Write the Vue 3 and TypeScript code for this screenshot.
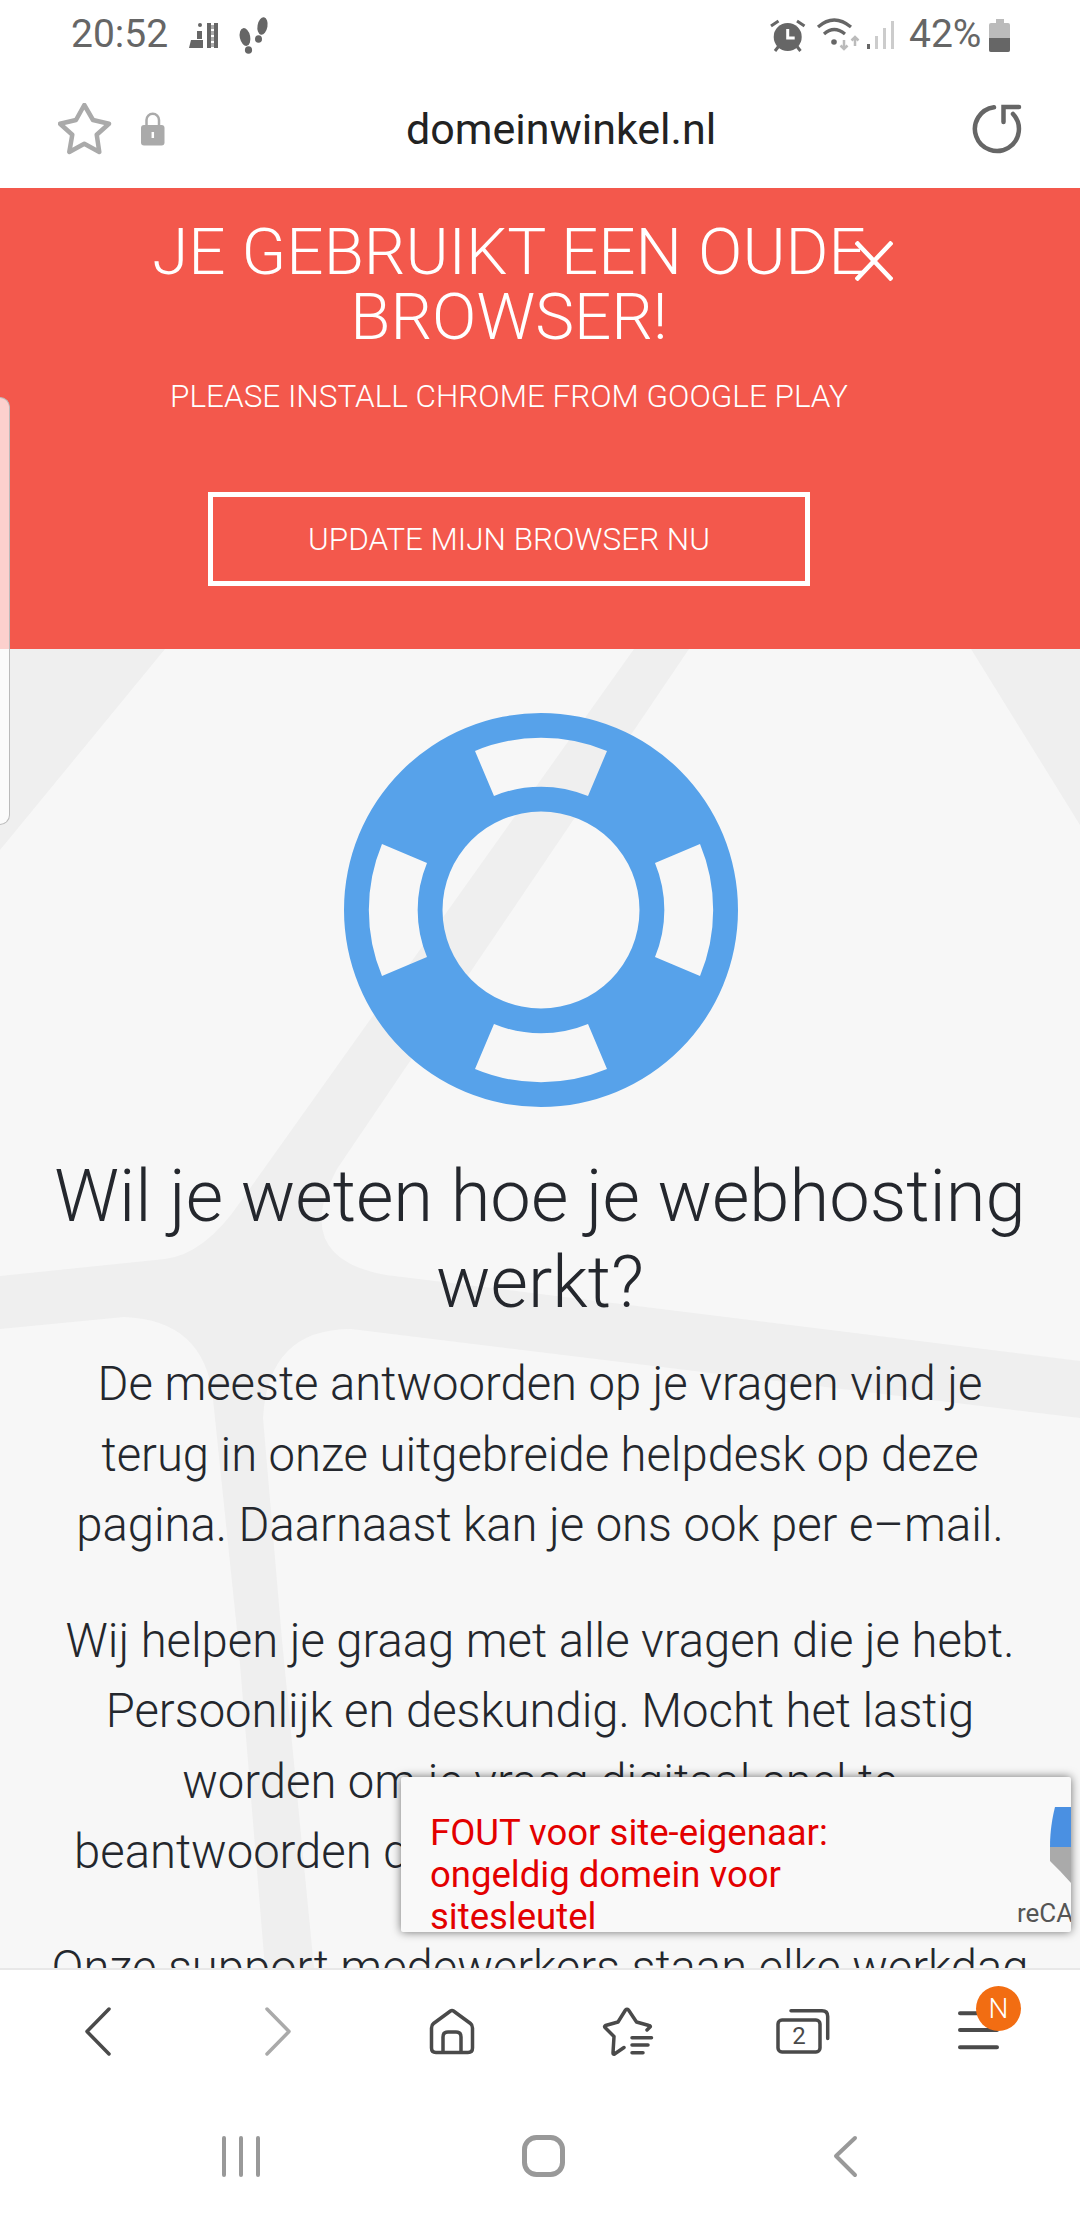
<template>
  <div class="phone">
    <div class="status-bar">
      <span class="time">20:52</span>
      <svg class="notif-icons" viewBox="188 10 84 42" width="84" height="42">
        <g fill="#666">
          <circle cx="200" cy="21" r="2" />
          <path d="M197 27h5v8h-5zM191 36h12v8h-14z" />
          <path d="M207 19h4v25h-4zM214 19h4v25h-4z" />
          <path d="M211 21h3v4h-3zM211 27h3v4h-3zM211 33h3v4h-3zM211 39h3v4h-3z" opacity=".55" />
          <ellipse cx="245" cy="33" rx="5.2" ry="9" transform="rotate(-12 245 33)" />
          <ellipse cx="248.5" cy="46" rx="3.6" ry="3.8" />
          <ellipse cx="262.5" cy="22" rx="5" ry="8.8" transform="rotate(10 262.5 22)" />
          <ellipse cx="258.5" cy="35" rx="3.5" ry="3.8" />
        </g>
      </svg>
      <svg class="sys-icons" viewBox="768 10 128 42" width="128" height="42">
        <circle cx="787.7" cy="33" r="14" fill="#666" />
        <path d="M787.7 25v9h7" fill="none" stroke="#fff" stroke-width="3" />
        <path d="M771 22l7.500-5M797 17l7.500 5M775 47l3.500-4.500M797 42.500l3.500 4.500" fill="none" stroke="#666" stroke-width="3" />
        <path d="M818 23q16-14 33 0M824 30q10-9 21 0" fill="none" stroke="#666" stroke-width="3.2" />
        <circle cx="834" cy="38" r="2.800" fill="#666" />
        <path d="M844 36v9m-3.500-3.500l3.500 3.500 3.500-3.500M855 42v-9m-3.500 3.500l3.500-3.500 3.500 3.500" fill="none" stroke="#bbb" stroke-width="2.500" />
        <path d="M867 40h3v5h-3z" fill="#666" />
        <path d="M875 32h3v13h-3zM883 24h3v21h-3zM891 17h3v28h-3z" fill="#ccc" />
      </svg>
      <span class="battery-text">42%</span>
      <div class="battery">
        <div class="battery-cap"></div>
        <div class="battery-body"><div class="battery-level"></div></div>
      </div>
    </div>

    <div class="url-bar">
      <svg viewBox="58 101 54 52" width="54" height="52">
        <path d="M84.300 103l8.700 15 16 3.700-12.300 11 2.600 17.300-15-8.300-15 8.300 3-17.300-12.300-11 16-3.700z" fill="none" stroke="#aaa" stroke-width="4.500" stroke-linejoin="round" />
      </svg>
      <svg class="lock" viewBox="140 108 26 36" width="26" height="36">
        <path d="M146.500 123v-6a6 6 0 0 1 12.500 0v6" fill="none" stroke="#aaa" stroke-width="2.500" />
        <rect x="141" y="122" width="23.500" height="20.500" rx="3" fill="#aaa" />
        <path d="M152.800 129v6" stroke="#fff" stroke-width="2.500" />
      </svg>
      <span class="url">domeinwinkel.nl</span>
      <svg viewBox="970 102 50 50" width="50" height="50">
        <path d="M992 105.200A22 22 0 1 0 1011 112" fill="none" stroke="#666" stroke-width="4.500" stroke-linecap="round" />
        <path d="M1017 105h-15.500v15" fill="none" stroke="#666" stroke-width="4.500" stroke-linecap="round" />
      </svg>
    </div>

    <section class="banner">
      <h1>JE GEBRUIKT EEN OUDE BROWSER!</h1>
      <p>PLEASE INSTALL CHROME FROM GOOGLE PLAY</p>
      <a class="update-btn">UPDATE MIJN BROWSER NU</a>
      <svg class="close" viewBox="0 0 38 40" width="38" height="40">
        <path d="M1 1l36 38M37 1L1 39" fill="none" stroke="#fff" stroke-width="4.500" />
      </svg>
    </section>

    <main class="content">
      <svg class="roads" viewBox="0 649 1080 1319" width="1080" height="1319">
        <path d="M0 649H165L0 850ZM971 649H1080V825Z" fill="#efefef" />
        <path d="M634 649L241 1201Q205 1254 165 1259L0 1276V1329L124 1317Q205 1320 213 1399L238 1640L265 1968H314L282 1640L263 1418Q268 1329 351 1329L1080 1418V1361L386 1275Q290 1258 337 1169L689 649Z" fill="#efefef" />
      </svg>

      <svg class="buoy" viewBox="-197 -197 394 394" width="394" height="394">
        <path fill-rule="evenodd" fill="#57a2ea" d="M-197 0A197 197 0 1 0 197 0A197 197 0 1 0 -197 0ZM-98.500 0A98.500 98.500 0 1 1 98.500 0A98.500 98.500 0 1 1 -98.500 0ZM-66 -159A172 172 0 0 1 66 -159L47 -114A123 123 0 0 0 -47 -114ZM66 159A172 172 0 0 1 -66 159L-47 114A123 123 0 0 0 47 114ZM159 -66A172 172 0 0 1 159 66L114 47A123 123 0 0 0 114 -47ZM-159 66A172 172 0 0 1 -159 -66L-114 -47A123 123 0 0 0 -114 47Z" />
      </svg>

      <h2>Wil je weten hoe je webhosting werkt?</h2>
      <p class="text">De meeste antwoorden op je vragen vind je terug in onze uitgebreide helpdesk op deze pagina. Daarnaast kan je ons ook per e–mail.</p>
      <p class="text">Wij helpen je graag met alle vragen die je hebt.<br />Persoonlijk en deskundig. Mocht het lastig<br />worden om je vraag digitaal snel te<br />beantwoorden dan helpen we je graag verder.</p>
      <p class="text">Onze support medewerkers staan elke werkdag</p>

      <div class="captcha">
        <div class="captcha-error">FOUT voor site-eigenaar: ongeldig domein voor sitesleutel</div>
        <svg class="captcha-logo" viewBox="0 0 21 76" width="21" height="76">
          <path d="M5 0H21V40H0C0 25 2 12 5 0Z" fill="#4a90e2" />
          <path d="M0 40H21V76L10 64L0 54Z" fill="#aaa" />
        </svg>
        <span class="captcha-label">reCAPTCHA</span>
      </div>
    </main>

    <nav class="bottom">
      <div class="toolbar">
        <svg viewBox="68 2001 60 60" width="60" height="60">
          <path d="M109 2009L87 2031.500L109 2054" class="line dark" />
        </svg>
        <svg viewBox="244 2001 60 60" width="60" height="60">
          <path d="M267 2009L289 2031.500L267 2054" class="line light" />
        </svg>
        <svg viewBox="420 2001 60 60" width="60" height="60">
          <path d="M443 2052v-15q0-5 5-5h8q5 0 5 5v15M436 2052.500h32q4.500 0 4.500-4.500v-20q0-3-2-4.500l-17-12.500q-1.500-1-3 0l-17 12.500q-2 1.500-2 4.500v20q0 4.500 4.500 4.500z" class="line dark" />
        </svg>
        <svg viewBox="596 2001 60 60" width="60" height="60">
          <path d="M647 2030l3-3q1-1-1-1.500l-12.500-3.500-8-12q-1.500-1.500-3 0l-7.500 12-12.500 3.500q-1.500 1-.5 2l9 9-1 16.500q0 1.500 1.500 1l9.500-6.500" class="line dark" />
          <path d="M632 2037.700h19.500M632 2045h16M632 2052.700h11" class="line dark" />
        </svg>
        <svg viewBox="772 2001 60 60" width="60" height="60">
          <rect x="778" y="2020" width="42" height="32" rx="4" class="line dark" />
          <path d="M791 2010.700h31q5.700 0 5.700 5.700v22" class="line dark" />
          <text x="799" y="2044" class="tab-count">2</text>
        </svg>
        <div class="menu">
          <svg viewBox="948 2001 60 60" width="60" height="60">
            <path d="M960 2013.300h37M960 2030h37M960 2047.300h37" class="line dark thick" />
          </svg>
          <span class="badge">N</span>
        </div>
      </div>
      <div class="sys-nav">
        <svg viewBox="211 2126 60 60" width="60" height="60">
          <path d="M224 2138v37M241 2138v37M258 2138v37" class="line sys" />
        </svg>
        <svg viewBox="513 2126 60 60" width="60" height="60">
          <rect x="524.500" y="2137.500" width="38" height="37" rx="12" class="line sys wide" />
        </svg>
        <svg viewBox="815 2126 60 60" width="60" height="60">
          <path d="M855 2138L836 2156L855 2175" class="line sys" />
        </svg>
      </div>
    </nav>

    <div class="edge-tab"></div>
  </div>
</template>

<script setup lang="ts">
</script>

<style>
html,
body {
  margin: 0;
  background: #fff;
}
</style>

<style scoped>
.phone {
  position: relative;
  width: 1080px;
  height: 2220px;
  display: flex;
  flex-direction: column;
  overflow: hidden;
  background: #fff;
  font-family: Roboto, "Liberation Sans", sans-serif;
}

.status-bar {
  height: 70px;
  display: flex;
  align-items: center;
  padding: 0 70px 0 71px;
  box-sizing: border-box;
  color: #666;
  font-size: 39px;
}

.time {
  width: 117px;
  font-weight: 400;
  margin-bottom: 3px;
}

.sys-icons {
  margin-left: auto;
}

.battery-text {
  margin-left: 13px;
  width: 80px;
  margin-bottom: 3px;
}

.battery {
  width: 21px;
  height: 33px;
  display: flex;
  flex-direction: column;
  align-items: center;
}

.battery-cap {
  width: 8px;
  height: 4px;
  background: #bbb;
}

.battery-body {
  width: 21px;
  flex: 1;
  background: #bbb;
  border-radius: 2px;
  display: flex;
  align-items: flex-end;
  overflow: hidden;
}

.battery-level {
  width: 100%;
  height: 46%;
  background: #666;
}

.url-bar {
  height: 118px;
  display: flex;
  align-items: center;
  padding: 0 58px;
  box-sizing: border-box;
}

.lock {
  margin-left: 28px;
}

.url {
  flex: 1;
  margin-right: 16px;
  text-align: center;
  font-size: 43px;
  color: #222;
}

.banner {
  position: relative;
  height: 461px;
  box-sizing: border-box;
  padding: 31px 62px 0 0;
  display: flex;
  flex-direction: column;
  align-items: center;
  background: #f3584c;
  color: #fff;
  font-weight: 300;
}

.banner h1 {
  margin: 0;
  width: 760px;
  text-align: center;
  font-size: 65.500px;
  line-height: 65px;
  font-weight: 300;
}

.banner p {
  margin: 23px 0 0;
  font-size: 31.500px;
  line-height: 50px;
}

.update-btn {
  margin-top: 70px;
  width: 602px;
  height: 94px;
  box-sizing: border-box;
  border: 5px solid #fff;
  display: flex;
  align-items: center;
  justify-content: center;
  font-size: 31.500px;
}

.close {
  position: absolute;
  left: 855px;
  top: 53px;
}

.content {
  position: relative;
  flex: 1;
  min-height: 0;
  overflow: hidden;
  background: #f7f7f7;
  padding-top: 64px;
  display: flex;
  flex-direction: column;
  align-items: center;
  color: #24272d;
  text-align: center;
}

.roads {
  position: absolute;
  left: 0;
  top: 0;
}

.buoy {
  position: relative;
  flex: none;
  margin-left: 2px;
}

.content h2 {
  position: relative;
  margin: 47px 0 0;
  width: 1000px;
  font-size: 72.300px;
  line-height: 86px;
  font-weight: 300;
}

.text {
  position: relative;
  margin: 0 0 45px;
  width: 1060px;
  flex: none;
  font-size: 47.200px;
  line-height: 70.500px;
  font-weight: 300;
  white-space: nowrap;
}

.content h2 + .text {
  margin-top: 23px;
  width: 960px;
  white-space: normal;
}

.captcha {
  position: absolute;
  left: 401px;
  top: 1128px;
  width: 670px;
  height: 155px;
  overflow: hidden;
  background: #f9f9f9;
  box-shadow: 0 0 10px rgba(0, 0, 0, 0.55);
  border-radius: 2px;
  text-align: left;
}

.captcha-error {
  position: absolute;
  left: 29px;
  top: 35px;
  width: 460px;
  font-size: 36.500px;
  line-height: 42px;
  color: #e30000;
}

.captcha-logo {
  position: absolute;
  right: 0;
  top: 30px;
}

.captcha-label {
  position: absolute;
  left: 616px;
  top: 121px;
  font-size: 26px;
  color: #555;
  white-space: nowrap;
}

.bottom {
  flex: none;
  height: 252px;
  border-top: 2px solid #e8e8e8;
  box-sizing: border-box;
  background: #fff;
  position: relative;
}

.toolbar {
  height: 122px;
  display: flex;
  align-items: center;
  justify-content: space-between;
  padding: 0 72px 0 68px;
  box-sizing: border-box;
}

.sys-nav {
  height: 128px;
  display: flex;
  align-items: center;
  gap: 242px;
  padding-left: 211px;
}

svg {
  display: block;
  flex: none;
}

.line {
  fill: none;
  stroke-linecap: round;
  stroke-linejoin: round;
  stroke-width: 3.5px;
}

.dark {
  stroke: #4a4a4a;
}

.light {
  stroke: #aaa;
}

.thick {
  stroke-width: 4px;
}

.sys {
  stroke: #999;
  stroke-width: 4px;
}

.wide {
  stroke-width: 5px;
}

.tab-count {
  font-size: 24px;
  fill: #4a4a4a;
  text-anchor: middle;
  font-family: Roboto, sans-serif;
}

.menu {
  position: relative;
  width: 60px;
  height: 60px;
}

.badge {
  position: absolute;
  left: 28px;
  top: -15px;
  width: 45px;
  height: 45px;
  border-radius: 50%;
  background: #f26d12;
  color: #fff;
  font-size: 28px;
  font-weight: 300;
  line-height: 45px;
  text-align: center;
}

.edge-tab {
  position: absolute;
  left: 0;
  top: 397px;
  width: 10px;
  height: 428px;
  box-sizing: border-box;
  background: rgba(255, 255, 255, 0.72);
  border: 1.500px solid #bbb;
  border-left: none;
  border-radius: 0 10px 10px 0;
}
</style>
